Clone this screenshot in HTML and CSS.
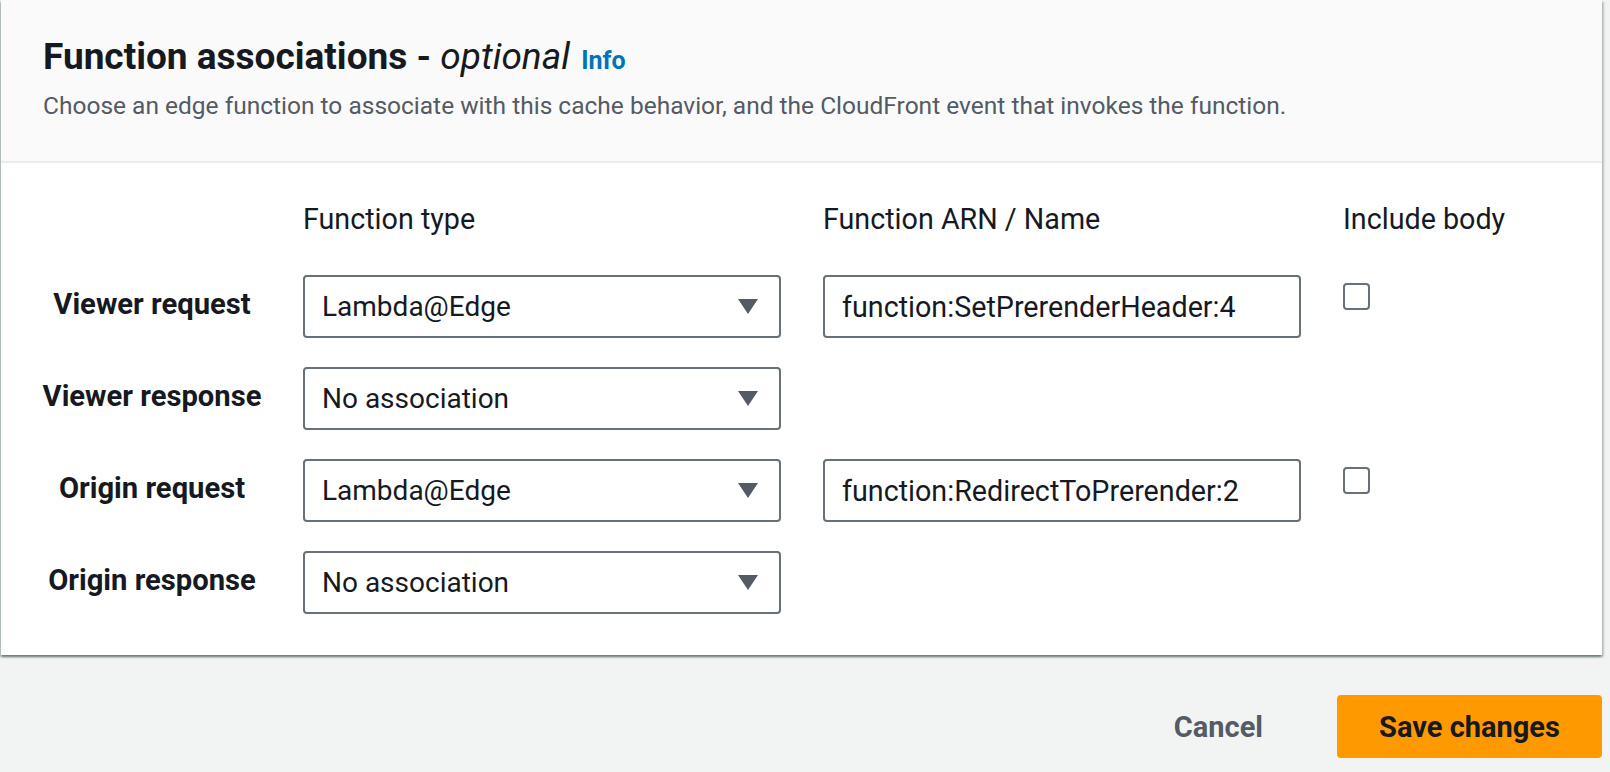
FILE: index.html
```html
<!DOCTYPE html>
<html lang="en">
<head>
<meta charset="utf-8">
<title>Function associations</title>
<link rel="stylesheet" href="styles.css">
</head>
<body>
<div class="page">
  <section class="card">
    <header class="card-header">
      <h2 class="title"><span class="title-main">Function associations</span> - <em class="title-opt">optional</em> <a class="info" href="#">Info</a></h2>
      <p class="desc">Choose an edge function to associate with this cache behavior, and the CloudFront event that invokes the function.</p>
    </header>
    <div class="card-body">
      <div class="grid">
        <div class="colhead blank"></div>
        <div class="colhead">Function type</div>
        <div class="colhead">Function ARN / Name</div>
        <div class="colhead">Include body</div>

        <div class="rowlabel"><span>Viewer request</span></div>
        <div class="select"><span class="select-text">Lambda@Edge</span><svg class="caret" width="20" height="15" viewBox="0 0 20 15"><polygon points="0,0 20,0 10,15" fill="#545b64"/></svg></div>
        <div class="input">function:SetPrerenderHeader:4</div>
        <div class="checkcell"><span class="checkbox"></span></div>

        <div class="rowlabel"><span>Viewer response</span></div>
        <div class="select"><span class="select-text">No association</span><svg class="caret" width="20" height="15" viewBox="0 0 20 15"><polygon points="0,0 20,0 10,15" fill="#545b64"/></svg></div>
        <div class="empty"></div>
        <div class="empty"></div>

        <div class="rowlabel"><span>Origin request</span></div>
        <div class="select"><span class="select-text">Lambda@Edge</span><svg class="caret" width="20" height="15" viewBox="0 0 20 15"><polygon points="0,0 20,0 10,15" fill="#545b64"/></svg></div>
        <div class="input">function:RedirectToPrerender:2</div>
        <div class="checkcell"><span class="checkbox"></span></div>

        <div class="rowlabel"><span>Origin response</span></div>
        <div class="select"><span class="select-text">No association</span><svg class="caret" width="20" height="15" viewBox="0 0 20 15"><polygon points="0,0 20,0 10,15" fill="#545b64"/></svg></div>
        <div class="empty"></div>
        <div class="empty"></div>
      </div>
    </div>
  </section>
  <footer class="actions">
    <button class="btn btn-link" type="button">Cancel</button>
    <button class="btn btn-primary" type="button">Save changes</button>
  </footer>
</div>
</body>
</html>
```
FILE: styles.css
```css
* { box-sizing: border-box; }
html, body { margin: 0; padding: 0; }
body {
  background: #f2f3f3;
  font-family: Roboto, "Liberation Sans", sans-serif;
  color: #16191f;
  width: 1610px;
  height: 772px;
  overflow: hidden;
}
.page { padding: 0 8px 0 1px; }
.card {
  background: #fff;
  box-shadow: 0 2px 2px 0 rgba(0,28,36,.35), 2px 2px 2px 0 rgba(0,28,36,.18), -2px 2px 2px 0 rgba(0,28,36,.18);
}
.card-header {
  background: #fafafa;
  border-bottom: 2px solid #eaeded;
  padding: 35px 40px 0 42px;
  height: 163px;
}
.title {
  margin: 0;
  font-size: 37px;
  line-height: 44px;
  font-weight: 700;
  color: #16191f;
}
.title-opt { font-weight: 400; font-style: italic; }
.info {
  font-size: 25px;
  font-weight: 700;
  color: #0073bb;
  text-decoration: none;
  margin-left: 2px;
}
.desc {
  margin: 6px 0 0;
  font-size: 24.5px;
  line-height: 34px;
  color: #545b64;
}
.card-body { padding: 38px 0 41px 42px; }
.grid {
  display: grid;
  grid-template-columns: 218px 478px 478px 1fr;
  column-gap: 42px;
  row-gap: 29px;
  align-items: center;
}
.colhead {
  font-size: 28.7px;
  line-height: 36px;
  padding-bottom: 9px;
  align-self: start;
  white-space: nowrap;
}
.rowlabel {
  display: flex;
  justify-content: center;
  font-size: 29.2px;
  line-height: 36px;
  font-weight: 700;
  white-space: nowrap;
  margin-bottom: 6px;
}
.rowlabel span { flex: none; }
.select, .input {
  height: 63px;
  border: 2px solid #687078;
  border-radius: 4px;
  background: #fff;
  font-size: 28px;
  line-height: 36px;
  display: flex;
  align-items: center;
  padding: 0 21px 0 17px;
  white-space: nowrap;
}
.input { font-size: 28.7px; }
.select { justify-content: space-between; }
.caret { display: block; }
.checkcell { align-self: start; padding-top: 8px; }
.checkbox {
  display: block;
  width: 27px;
  height: 27px;
  border: 2px solid #687078;
  border-radius: 4px;
  background: #fff;
}
.actions {
  display: flex;
  justify-content: flex-end;
  align-items: center;
  gap: 30px;
  margin-top: 40px;
}
.btn {
  font-family: inherit;
  font-size: 29px;
  font-weight: 700;
  line-height: 36px;
  height: 63px;
  border-radius: 4px;
  padding: 0 42px;
  cursor: pointer;
  white-space: nowrap;
}
.btn-link {
  background: transparent;
  border: 2px solid transparent;
  color: #545b64;
}
.btn-primary {
  background: #ff9900;
  border: 2px solid #ff9900;
  color: #16191f;
  width: 265px;
  padding: 0;
}
```
